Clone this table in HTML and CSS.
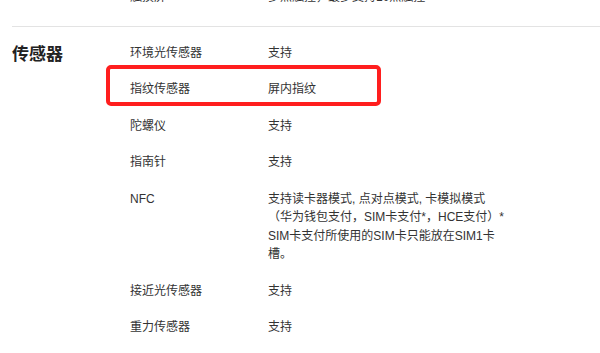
FILE: index.html
```html
<!DOCTYPE html>
<html lang="zh-CN">

<head>
    <meta charset="UTF-8">
    <meta name="viewport" content="width=device-width, initial-scale=1.0">
    <title>规格参数</title>
    <link rel="stylesheet" href="styles.css">
</head>

<body>

    <div class="specs">
        <section class="group group-prev">
            <h2 class="group-title"></h2>
            <dl class="items">
                <div class="item">
                    <dt>触摸屏</dt>
                    <dd>多点触控，最多支持10点触控</dd>
                </div>
            </dl>
        </section>

        <section class="group">
            <h2 class="group-title">传感器</h2>
            <dl class="items">
                <div class="item">
                    <dt>环境光传感器</dt>
                    <dd>支持</dd>
                </div>
                <div class="item marked">
                    <dt>指纹传感器</dt>
                    <dd>屏内指纹</dd>
                </div>
                <div class="item">
                    <dt>陀螺仪</dt>
                    <dd>支持</dd>
                </div>
                <div class="item">
                    <dt>指南针</dt>
                    <dd>支持</dd>
                </div>
                <div class="item">
                    <dt>NFC</dt>
                    <dd>支持读卡器模式, 点对点模式, 卡模拟模式<br>（华为钱包支付，SIM卡支付*，HCE支付）*<br>SIM卡支付所使用的SIM卡只能放在SIM1卡槽。</dd>
                </div>
                <div class="item">
                    <dt>接近光传感器</dt>
                    <dd>支持</dd>
                </div>
                <div class="item">
                    <dt>重力传感器</dt>
                    <dd>支持</dd>
                </div>
            </dl>
        </section>
    </div>

</body>

</html>
```

FILE: styles.css
```css
html,
body {
    margin: 0;
    padding: 0;
    background: #fff;
    overflow: hidden;
    font-family: 'Liberation Sans', 'Noto Sans CJK SC', sans-serif;
    color: #333;
}

.specs {
    margin-top: -21px;
    padding-left: 12px;
}

.group {
    display: flex;
    align-items: flex-start;
    border-top: 1px solid #e3e3e3;
    padding-top: 8px;
}

.group-prev {
    border-top: none;
    padding-top: 0;
    padding-bottom: 10px;
}

.group-title {
    width: 118px;
    flex-shrink: 0;
    margin: 8px 0 0;
    font-size: 17px;
    line-height: 24px;
    font-weight: bold;
    color: #222;
}

.items {
    margin: 0;
    flex: 1;
}

.item {
    display: flex;
    padding: 9px 0;
    font-size: 12px;
    line-height: 18.5px;
}

.item dt {
    width: 138px;
    flex-shrink: 0;
}

.item dd {
    margin: 0;
    width: 250px;
}
/* Red marker round one row */

.marked {
    position: relative;
}

.marked::after {
    content: '';
    position: absolute;
    top: -6px;
    left: -24px;
    width: 275px;
    height: 41px;
    box-sizing: border-box;
    border: 4px solid #ff1e1e;
    border-radius: 5px;
}
```
